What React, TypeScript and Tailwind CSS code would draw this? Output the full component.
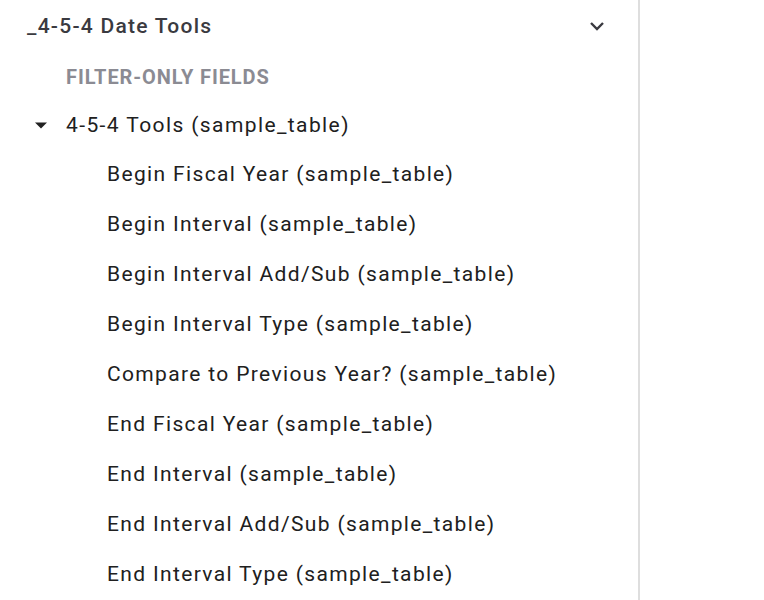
import React from "react";

const items = [
  "Begin Fiscal Year (sample_table)",
  "Begin Interval (sample_table)",
  "Begin Interval Add/Sub (sample_table)",
  "Begin Interval Type (sample_table)",
  "Compare to Previous Year? (sample_table)",
  "End Fiscal Year (sample_table)",
  "End Interval (sample_table)",
  "End Interval Add/Sub (sample_table)",
  "End Interval Type (sample_table)",
];

export default function App() {
  return (
    <div className="w-[764px] h-[600px] overflow-hidden bg-white flex" style={{ fontFamily: "Roboto, 'Noto Sans', sans-serif" }}>
      <div className="w-[640px] h-full border-r-2 border-[#dedede] flex flex-col shrink-0 pt-[1px]">
        <div className="h-[52px] flex items-center pl-[27px] pr-[33px] justify-between shrink-0">
          <span className="text-[21px] font-medium text-[#3a3a40] tracking-[1.25px]">_4-5-4 Date Tools</span>
          <svg width="16" height="10" viewBox="0 0 16 10" className="-mt-[2px]">
            <path d="M2 2 L8 8 L14 2" fill="none" stroke="#3a3a40" strokeWidth="2.4" />
          </svg>
        </div>
        <div className="h-[48px] flex items-center pl-[66px] shrink-0">
          <span className="text-[20px] font-bold text-[#8b8b93] tracking-[0.9px]">FILTER-ONLY FIELDS</span>
        </div>
        <div className="h-[49px] flex items-center pl-[35px] shrink-0">
          <svg width="12" height="7" viewBox="0 0 12 7" className="mr-[19px] -mt-[1px]">
            <path d="M0 0.5 L12 0.5 L6 6.5 Z" fill="#222222" />
          </svg>
          <span className="text-[21px] text-[#202020] tracking-[1.4px]">4-5-4 Tools (sample_table)</span>
        </div>
        {items.map((t) => (
          <div key={t} className="h-[50px] flex items-center pl-[107px] shrink-0">
            <span className="text-[21px] text-[#202020] tracking-[1.35px]">{t}</span>
          </div>
        ))}
      </div>
    </div>
  );
}
